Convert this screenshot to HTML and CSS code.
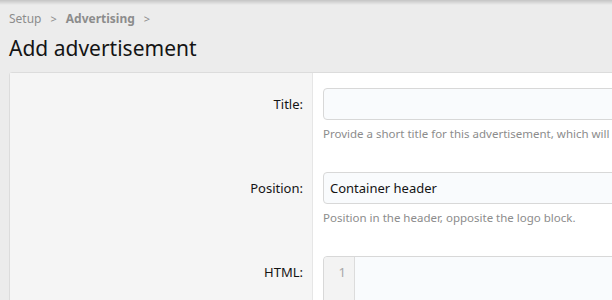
FILE: index.html
```html
<html>
    <head>
        <title>Add advertisement</title>
        <link rel="stylesheet" href="styles.css">
    </head>
    <body>
        <div class="top-shadow"></div>
        <div class="crumbs">
            <span class="crumb">Setup</span>
            <span class="sep">&gt;</span>
            <span class="crumb crumb-bold">Advertising</span>
            <span class="sep">&gt;</span>
        </div>
        <h1 class="page-title">Add advertisement</h1>
        <div class="block">
            <div class="row">
                <div class="row-label">Title:</div>
                <div class="row-input">
                    <div class="input"></div>
                    <div class="explain">Provide a short title for this advertisement, which will</div>
                </div>
            </div>
            <div class="row">
                <div class="row-label">Position:</div>
                <div class="row-input">
                    <div class="input">Container header</div>
                    <div class="explain">Position in the header, opposite the logo block.</div>
                </div>
            </div>
            <div class="row">
                <div class="row-label">HTML:</div>
                <div class="row-input">
                    <div class="code">
                        <div class="gutter">1</div>
                        <div class="code-body"></div>
                    </div>
                </div>
            </div>
        </div>
    </body>
</html>
```
FILE: styles.css
```css
body{
    margin: 0;
    background: #ececec;
    color: #141414;
    font-family: 'Noto Sans', 'Open Sans', sans-serif;
    font-size: 13px;
    overflow: hidden;
}

.top-shadow{
    height: 5px;
    background: linear-gradient(#c4c4c4, #ececec);
}

.crumbs{
    display: flex;
    align-items: center;
    gap: 9px;
    padding: 4px 9px 0;
    height: 18px;
    color: #8c8c8c;
    font-size: 12px;
}
.crumb-bold{
    font-weight: bold;
}
.sep{
    font-size: 11px;
}

.page-title{
    margin: 0;
    padding: 6px 9px 0;
    height: 39px;
    font-size: 21px;
    font-weight: normal;
    line-height: 30px;
}

.block{
    margin-left: 9px;
    width: 800px;
    background: #fff;
    border: 1px solid #dcdcdc;
    border-radius: 3px 0 0 0;
}

.row{
    display: grid;
    grid-template-columns: 303px 1fr;
}
.row-label{
    background: #f5f5f5;
    border-right: 1px solid #e6e6e6;
    text-align: right;
    padding: 15px 9px 0 0;
    line-height: 32px;
}
.row-input{
    padding: 15px 10px 15px 10px;
}

.input{
    height: 30px;
    line-height: 30px;
    padding: 0 6px;
    background: #f9fbfd;
    border: 1px solid #d8d8d8;
    border-radius: 4px;
    white-space: nowrap;
}
.explain{
    margin-top: 6px;
    height: 16px;
    line-height: 16px;
    font-size: 11.5px;
    color: #8c8c8c;
    white-space: nowrap;
}

.code{
    display: flex;
    height: 120px;
    border: 1px solid #d8d8d8;
    border-radius: 4px;
    background: #f9fbfd;
}
.gutter{
    width: 22px;
    padding: 6px 8px 0 0;
    text-align: right;
    color: #a8a8a8;
    background: #f3f3f3;
    border-right: 1px solid #dcdcdc;
    border-radius: 4px 0 0 4px;
}
.code-body{
    flex: 1;
}
```
